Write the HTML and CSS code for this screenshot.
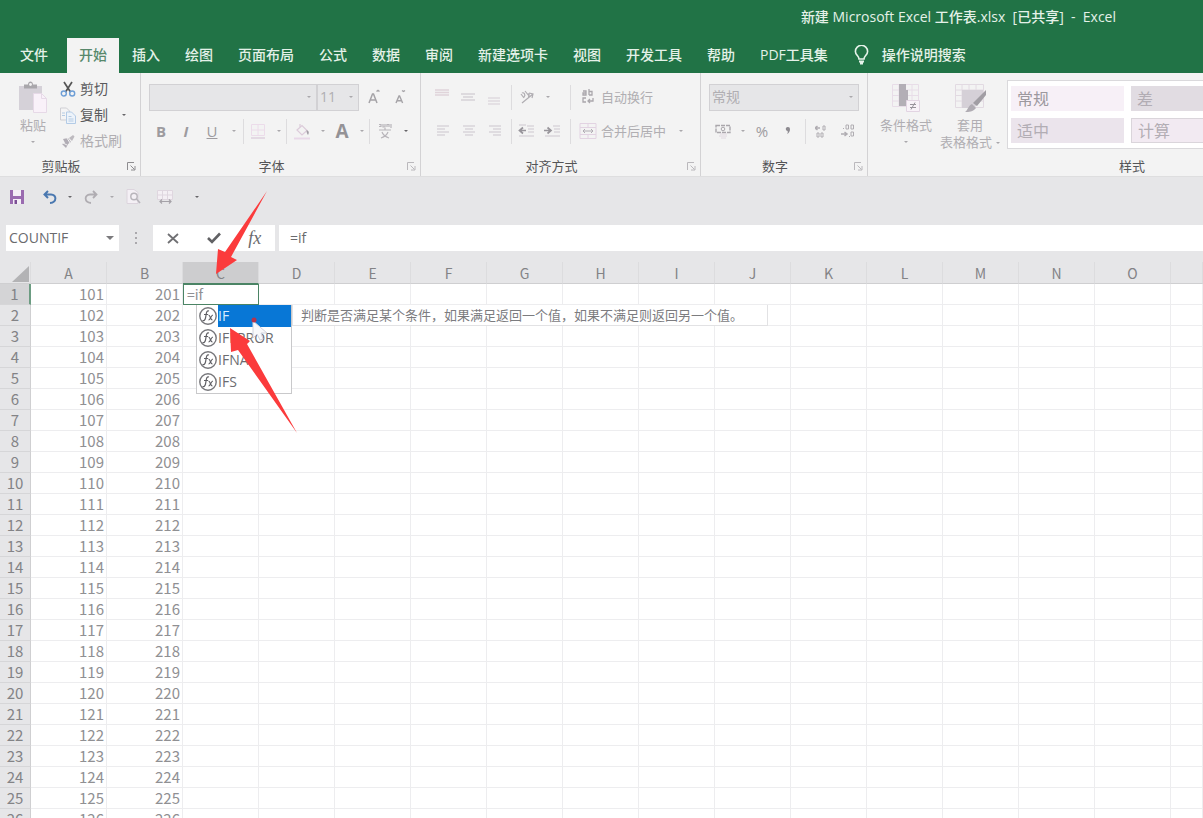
FILE: index.html
```html
<!DOCTYPE html>
<html lang="zh-CN">
<head>
<meta charset="utf-8">
<title>新建 Microsoft Excel 工作表.xlsx</title>
<link rel="stylesheet" href="styles.css">
</head>
<body>
<header class="titlebar">
  <h1 class="title">新建 Microsoft Excel 工作表.xlsx&nbsp; [已共享]&nbsp; -&nbsp; Excel</h1>
</header>
<nav class="tabs">
  <button class="tab tab-file">文件</button>
  <button class="tab tab-active">开始</button>
  <button class="tab">插入</button>
  <button class="tab">绘图</button>
  <button class="tab">页面布局</button>
  <button class="tab">公式</button>
  <button class="tab">数据</button>
  <button class="tab">审阅</button>
  <button class="tab">新建选项卡</button>
  <button class="tab">视图</button>
  <button class="tab">开发工具</button>
  <button class="tab">帮助</button>
  <button class="tab">PDF工具集</button>
  <button class="tab tab-search">
    <svg width="15" height="20" viewBox="0 0 15 20" fill="none" stroke="#e6f3ea" stroke-width="1.6"><path d="M5 14c0-3-3.6-4-3.6-7.6a6.1 6.1 0 0 1 12.200 0C13.600 10 10 11 10 14z"/><path d="M5 16.500h5M6 18.500h3" stroke-width="2"/></svg>
    操作说明搜索</button>
</nav>

<section class="ribbon">
  <div class="group group-clipboard">
    <div class="group-body">
      <button class="big off paste">
        <svg width="30" height="32" viewBox="0 0 30 32"><path d="M1 5h23v24H1z" fill="#d5d1d8"/><path d="M6 3.500h4c0-4 5-4 5 0h4v4H6z" fill="#a9a7ab"/><circle cx="12.500" cy="3.500" r="1.400" fill="#f3f3f3"/><path d="M15.500 12.500h8l5 5v14h-13z" fill="#f9f1f9" stroke="#e6d9e7"/><path d="M23.500 12.500v5h5" fill="none" stroke="#e6d9e7"/></svg>
        <span>粘贴</span><i class="caret"></i>
      </button>
      <div class="stack">
        <button class="line"><svg width="16" height="16" viewBox="0 0 16 16" fill="none"><path d="M4 1l6.500 10M12 1L5.500 11" stroke="#555" stroke-width="1.700"/><circle cx="3.800" cy="12.500" r="2.500" stroke="#6d9ed6" stroke-width="1.400"/><circle cx="12.200" cy="12.500" r="2.500" stroke="#6d9ed6" stroke-width="1.400"/></svg>剪切</button>
        <button class="line"><svg width="16" height="17" viewBox="0 0 16 17"><path d="M.5 1h6l3 3v9h-9z" fill="#f4f4f5" stroke="#cfcfd4"/><path d="M6.500 5h5l4 4v7.500h-9z" fill="#edf3fa" stroke="#b3cbe6"/><path d="M2 6h3M2 8.500h3M8.500 9.500h3M8.500 12h5M8.500 14h5" stroke="#b4cbe4" fill="none"/></svg>复制<i class="caret dark"></i></button>
        <button class="line off"><svg width="16" height="16" viewBox="0 0 16 16"><path d="M9 5l4-3 1.500 1.500L12 8z" fill="#bdbabf"/><path d="M3 6l5-1 3 4-3 2-2 4-4-4 3-1z" fill="#b1adb5"/><path d="M3 10l4 2M7 5l3 5" stroke="#f3f3f3"/></svg>格式刷</button>
      </div>
    </div>
    <div class="group-foot"><span>剪贴板</span><button class="launch dark" aria-label="剪贴板设置"><svg width="9" height="9" viewBox="0 0 9 9" fill="none" stroke="currentColor"><path d="M.5 8V.5H7M3.500 3.500l4 4M8 4v4H4"/></svg></button></div>
  </div>

  <div class="group group-font">
    <div class="group-body rows">
      <div class="row">
        <label class="drop drop-font"><select aria-label="字体" disabled><option></option></select></label>
        <label class="drop drop-size"><select aria-label="字号" disabled><option>11</option></select></label>
        <button class="tool w26 off" aria-label="增大字号"><svg width="14" height="16" viewBox="0 0 14 16" fill="none" stroke="#a5a3a7" stroke-width="1.500"><path d="M2 14L5.500 5h1L10 14M3.300 11h5.400M9.500 2.500l1.500-1 1.500 1"/></svg></button>
        <button class="tool w26 off" aria-label="减小字号"><svg width="14" height="16" viewBox="0 0 14 16" fill="none" stroke="#a5a3a7" stroke-width="1.400"><path d="M3 14l3-7h.600l3 7M4 11.800h4.500M9 1.500l1.500 1 1.500-1"/></svg></button>
      </div>
      <div class="row">
        <button class="tool w24 off letter"><b>B</b></button>
        <button class="tool w26 off letter"><b><em>I</em></b></button>
        <button class="tool w26 off letter"><u>U</u></button>
        <button class="tool w18 off" aria-label="下划线选项"><i class="caret"></i></button>
        <i class="sep"></i>
        <button class="tool w28 off" aria-label="边框"><svg width="16" height="16" viewBox="0 0 16 16" fill="none" stroke="#ecdcea"><path d="M1.500 1.500h13v11h-13zM8 1.500v11M1.500 7h13"/><path d="M1 15h14" stroke="#ded0de" stroke-width="1.500"/></svg></button>
        <button class="tool w14 off" aria-label="边框选项"><i class="caret"></i></button>
        <i class="sep"></i>
        <button class="tool w30 off" aria-label="填充颜色"><svg width="17" height="17" viewBox="0 0 17 17" fill="none"><path d="M3 7l5-4.500 5 5L8 12zM6 1v4" stroke="#dccbda" stroke-width="1.200"/><path d="M12.500 7c3 1 2.500 3 1.500 5-1-1-1.500-3-1.500-5z" fill="#a19da5"/><path d="M0 15.500h16" stroke="#e8d8e8" stroke-width="2"/></svg></button>
        <button class="tool w12 off" aria-label="填充选项"><i class="caret"></i></button>
        <button class="tool w26 off big-a"><b>A</b></button>
        <button class="tool w14 off" aria-label="字体颜色选项"><i class="caret"></i></button>
        <i class="sep"></i>
        <button class="tool w30 off" aria-label="拼音指南"><svg width="14" height="16" viewBox="0 0 14 16" fill="none" stroke="#b8b5ba" stroke-width="1.200"><path d="M1 1.500h2v2H1M5 1v3h2V1M9 4V1.500h2V4M13 1v4M1 7h12M7 5v2M4 9c1 3 4 5 7 6M10 9c-1 3-4 5-7 6"/></svg></button>
        <button class="tool w12 off" aria-label="拼音选项"><i class="caret dark"></i></button>
      </div>
    </div>
    <div class="group-foot"><span>字体</span><button class="launch" aria-label="字体设置"><svg width="9" height="9" viewBox="0 0 9 9" fill="none" stroke="currentColor"><path d="M.5 8V.5H7M3.500 3.500l4 4M8 4v4H4"/></svg></button></div>
  </div>

  <div class="group group-align">
    <div class="group-body rows">
      <div class="row">
        <button class="tool w26 off" aria-label="顶端对齐"><svg width="14" height="16" viewBox="0 0 14 16" stroke="#e0d4da" stroke-width="1.500"><path d="M0 1h14M0 3.500h14M0 6h14"/></svg></button>
        <button class="tool w26 off" aria-label="垂直居中"><svg width="14" height="16" viewBox="0 0 14 16" stroke="#d6d2d7" stroke-width="1.500"><path d="M0 5h14M2 8h10M0 11h14"/></svg></button>
        <button class="tool w26 off" aria-label="底端对齐"><svg width="14" height="16" viewBox="0 0 14 16" stroke="#dfdadf" stroke-width="1.500"><path d="M1 9h12M1 12h12M1 15h12"/></svg></button>
        <i class="gap4"></i><i class="sep"></i>
        <button class="tool w30 off" aria-label="方向"><svg width="16" height="16" viewBox="0 0 16 16" fill="none" stroke="#b0adb2" stroke-width="1.200"><path d="M3 14L14 5M10 4l4 1-1 4M2 5l3 4M3 4c2-1 4 2 2 4M6 2l4 5M9 5c2-1 1 3 0 3"/></svg></button>
        <button class="tool w12 off" aria-label="方向选项"><i class="caret"></i></button>
        <i class="gap16"></i><i class="sep"></i>
        <button class="tool text off"><svg width="18" height="16" viewBox="0 0 18 16" fill="none" stroke="#aaa7ac" stroke-width="1.300"><path d="M4 2h3v4H4V4h3M10 0v6M10 2.500h3V6h-3M7 9H4v4h3M14 9v3H9M11 10l-2 2 2 2"/></svg>自动换行</button>
      </div>
      <div class="row">
        <button class="tool w26 off" aria-label="左对齐"><svg width="13" height="14" viewBox="0 0 13 14" stroke="#d9d5da" stroke-width="1.300"><path d="M1 2h12M1 5h8M1 8h12M1 11h8"/></svg></button>
        <button class="tool w26 off" aria-label="居中"><svg width="13" height="14" viewBox="0 0 13 14" stroke="#d9d5da" stroke-width="1.300"><path d="M1 2h12M3 5h8M1 8h12M3 11h8"/></svg></button>
        <button class="tool w26 off" aria-label="右对齐"><svg width="13" height="14" viewBox="0 0 13 14" stroke="#d9d5da" stroke-width="1.300"><path d="M1 2h12M5 5h8M1 8h12M5 11h8"/></svg></button>
        <i class="gap4"></i><i class="sep"></i>
        <button class="tool w28 off" aria-label="减少缩进"><svg width="16" height="14" viewBox="0 0 16 14" fill="none"><path d="M9 2h7M10 5h6M10 8h6M1 12h15M1 1h7" stroke="#dad6db" stroke-width="1.300"/><path d="M8 6.500H1.500M5 3.500l-3.500 3 3.500 3" stroke="#98959b" stroke-width="1.700"/></svg></button>
        <button class="tool w24 off" aria-label="增加缩进"><svg width="16" height="14" viewBox="0 0 16 14" fill="none"><path d="M9 2h7M10 5h6M10 8h6M1 12h15" stroke="#dad6db" stroke-width="1.300"/><path d="M0 6.500h7M3.500 3.500l3.500 3-3.500 3" stroke="#98959b" stroke-width="1.700"/></svg></button>
        <i class="gap6"></i><i class="sep"></i>
        <button class="tool text off"><svg width="18" height="16" viewBox="0 0 18 16" fill="none"><path d="M1 .5h16v15H1zM1 4.500h16M1 11.500h16M9 .5v4M9 11.500v4" stroke="#e2d3e2"/><path d="M4 8h10M6 6L4 8l2 2M12 6l2 2-2 2" stroke="#b0acb3"/></svg>合并后居中</button>
        <button class="tool w30 off" aria-label="合并选项"><i class="caret"></i></button>
      </div>
    </div>
    <div class="group-foot"><span>对齐方式</span><button class="launch" aria-label="对齐设置"><svg width="9" height="9" viewBox="0 0 9 9" fill="none" stroke="currentColor"><path d="M.5 8V.5H7M3.500 3.500l4 4M8 4v4H4"/></svg></button></div>
  </div>

  <div class="group group-number">
    <div class="group-body rows">
      <div class="row"><label class="drop drop-number"><select aria-label="数字格式" disabled><option>常规</option></select></label></div>
      <div class="row">
        <button class="tool w28 off" aria-label="会计格式"><svg width="16" height="15" viewBox="0 0 16 15" fill="none" stroke="#aaa7ac"><path d="M1 1.500h14v7H1z" stroke-width="1.400" stroke-dasharray="4 1"/><circle cx="8" cy="5" r="1.800"/><path d="M5 10h7M4 12h8M6 14h5" stroke="#e0d8e0"/></svg></button>
        <button class="tool w12 off" aria-label="货币选项"><i class="caret"></i></button>
        <button class="tool w26 off letter">%</button>
        <button class="tool w26 off" aria-label="千位分隔"><svg width="8" height="10" viewBox="0 0 8 10"><path d="M4 1a2 2 0 0 1 2 2c0 2.500-1 4-3 5 1-1.500 1-2 .5-3A2 2 0 0 1 4 1z" fill="#8d8a90"/></svg></button>
        <i class="gap4"></i><i class="sep"></i>
        <button class="tool w30 off" aria-label="增加小数位"><svg width="12" height="14" viewBox="0 0 12 14" fill="none" stroke="#b0adb2"><path d="M0 4h5M2.500 2L0 4l2.500 2" stroke-width="1.500"/><path d="M8 2h2v4H8zM2 9h2v4H2zM6 9h2v4H6z"/></svg></button>
        <button class="tool w24 off" aria-label="减少小数位"><svg width="14" height="14" viewBox="0 0 14 14" fill="none" stroke="#b0adb2"><path d="M0 10h6M3.500 8L6 10l-2.500 2" stroke-width="1.500"/><path d="M5 1h2.500v4H5zM10 1h2.500v4H10zM10 8h2.500v4H10zM2 4.500h1M8 12.500h1"/></svg></button>
      </div>
    </div>
    <div class="group-foot"><span>数字</span><button class="launch" aria-label="数字设置"><svg width="9" height="9" viewBox="0 0 9 9" fill="none" stroke="currentColor"><path d="M.5 8V.5H7M3.500 3.500l4 4M8 4v4H4"/></svg></button></div>
  </div>

  <div class="group group-style">
    <div class="group-body">
      <button class="big off cond">
        <svg width="30" height="32" viewBox="0 0 30 32" fill="none"><path d="M1.500 3.500h26v22h-26zM1.500 9h26M1.500 14.500h26M1.500 20h26M8 3.500v22M21 3.500v22" stroke="#e8dde8"/><path d="M8 3h7v6h2v11h-2v5H8z" fill="#b3afb6"/><path d="M15.500 19.500h13v11h-13z" fill="#f8f2f8" stroke="#e2d4e2"/><path d="M19 23.500h6M19 26.500h6M24 21.500l-4 7" stroke="#98949b"/></svg>
        <span>条件格式</span><i class="caret"></i>
      </button>
      <button class="big off fmt">
        <svg width="33" height="32" viewBox="0 0 33 32" fill="none"><path d="M1.500 3.500h28v23h-28zM1.500 9h28M1.500 14.500h28M1.500 20h28M8 3.500v23M15 3.500v6M22 3.500v6" stroke="#e2dae2"/><path d="M8 9h21v9l-9 9H8z" fill="#d5d0d7"/><path d="M32 9v5l-9 11-4-3z" fill="#a19ea4"/><path d="M18 23l4 4c-3 4-7 4-11 4 3-2 3-6 7-8z" fill="#b0acb3"/></svg>
        <span>套用</span><span class="with-caret">表格格式<i class="caret"></i></span>
      </button>
      <div class="gallery">
        <button class="swatch s-normal">常规</button><button class="swatch s-bad">差</button>
        <button class="swatch s-mid">适中</button><button class="swatch s-calc">计算</button>
      </div>
    </div>
    <div class="group-foot"><span>样式</span></div>
  </div>
</section>

<div class="quick">
  <button class="tool w34" aria-label="保存"><svg width="14" height="14" viewBox="0 0 14 14"><path d="M0 0h14v14H0z" fill="#9a6bb0"/><path d="M3 0h8v6H3z" fill="#f4eef6"/><path d="M3 9h8v5H3z" fill="#f4eef6"/><path d="M4.500 10h2.500v4H4.500z" fill="#7c4f95"/></svg></button>
  <button class="tool w32" aria-label="撤消"><svg width="14" height="14" viewBox="0 0 14 14" fill="none" stroke="#4a78b0" stroke-width="2"><path d="M5 1L1.500 4.500 5 8M2 4.500h6c6 0 6 8-1 8.500"/></svg></button>
  <button class="tool w8" aria-label="撤消选项"><i class="caret dark"></i></button>
  <button class="tool w34" aria-label="恢复"><svg width="14" height="14" viewBox="0 0 14 14" fill="none" stroke="#b0adb2" stroke-width="1.800"><path d="M9 1l3.500 3.500L9 8M12 4.500H6c-6 0-6 8 1 8.500"/></svg></button>
  <button class="tool w8" aria-label="恢复选项"><i class="caret"></i></button>
  <button class="tool w34" aria-label="打印预览"><svg width="15" height="15" viewBox="0 0 15 15" fill="none"><path d="M1 .5h7l4 3v11H1z" fill="#f4f0f5" stroke="#dcd4dd"/><circle cx="8" cy="7.500" r="3.200" stroke="#b8b5bb" stroke-width="1.400"/><path d="M10.500 10l3.500 4" stroke="#b8b5bb" stroke-width="1.700"/></svg></button>
  <button class="tool w30" aria-label="列宽"><svg width="16" height="15" viewBox="0 0 16 15" fill="none"><path d="M.5 1.500h15v9H.5zM.5 6h15M5.500 1.500v9M10.500 1.500v9" fill="#f4eff4" stroke="#dfd6df"/><path d="M3 12.500h11M5 10.500l-2 2 2 2M12 10.500l2 2-2 2" stroke="#a5a2a8" stroke-width="1.200"/></svg></button>
  <button class="tool w34" aria-label="自定义快速访问工具栏"><i class="caret dark"></i></button>
</div>

<div class="formula">
  <div class="namebox"><input type="text" value="COUNTIF" aria-label="名称框"><button aria-label="名称列表"><i class="caret wide"></i></button></div>
  <svg class="dots" width="4" height="13" viewBox="0 0 4 13" fill="#aaa8ac"><path d="M1 0h2v2H1zM1 5h2v2H1zM1 10h2v2H1z"/></svg>
  <div class="fbuttons">
    <button aria-label="取消"><svg width="12" height="11" viewBox="0 0 12 11" fill="none" stroke="#707073" stroke-width="1.800"><path d="M1 1l10 9M11 1L1 10"/></svg></button>
    <button aria-label="输入"><svg width="14" height="12" viewBox="0 0 14 12" fill="none" stroke="#616164" stroke-width="2.600"><path d="M1 6l4 4 8-8.500"/></svg></button>
    <button class="fx"><em>fx</em></button>
  </div>
  <input class="fx-input" type="text" value="=if" aria-label="编辑栏">
</div>

<main class="sheet">
  <table class="grid">
    <colgroup id="cols"><col class="c-head"></colgroup>
    <thead><tr id="heads"><th class="corner"><svg width="17" height="16" viewBox="0 0 17 16"><path d="M17 0v16H0z" fill="#b3b3b5"/></svg></th></tr></thead>
    <tbody id="body"></tbody>
  </table>
  <div class="suggest">
    <ul class="list">
      <li class="on"><svg width="20" height="20"><use href="#fxi"/></svg><span>IF</span></li>
      <li><svg width="20" height="20"><use href="#fxi"/></svg><span>IFERROR</span></li>
      <li><svg width="20" height="20"><use href="#fxi"/></svg><span>IFNA</span></li>
      <li><svg width="20" height="20"><use href="#fxi"/></svg><span>IFS</span></li>
    </ul>
    <p class="tip">判断是否满足某个条件，如果满足返回一个值，如果不满足则返回另一个值。</p>
  </div>
</main>

<svg class="marks" width="320" height="450" viewBox="0 0 320 450">
  <defs><symbol id="fxi" viewBox="0 0 20 20"><circle cx="10" cy="10" r="8.200" fill="#fff" stroke="#77777b" stroke-width="1.400"/><path d="M11 5C8 4 8.500 8 7.500 12c-.5 2-1.500 3-3 2.500M6 8.500h4M10.500 9c2 0 1.500 5 4 5M15 9c-2 0-2.500 5-4.500 5" fill="none" stroke="#606065" stroke-width="1.200"/></symbol></defs>
  <path d="M253 321v17l4-4 3 6 3-1-2-6h6z" fill="#f8f8fb" stroke="#d2d2dc"/>
  <circle cx="254" cy="320" r="2.500" fill="#b3344e"/>
  <path d="M267 191L225 252l-7-3-2 25 21-14-6-3z" fill="#fb3b3c"/>
  <path d="M230 328l20 13-3 3 50 89-59-83-7 2z" fill="#fb3b3c"/>
</svg>
<script src="grid.js"></script>
</body>
</html>
```
FILE: styles.css
```css
* { box-sizing: border-box; }
body {
  margin: 0;
  height: 100vh;
  overflow: hidden;
  position: relative;
  display: flex;
  flex-direction: column;
  background: #fff;
  font: 14px/20px "Open Sans", "Noto Sans CJK SC", sans-serif;
  color: #5a5a5c;
}
button, input, select { font: inherit; color: inherit; }
button { background: none; border: 0; padding: 0; display: flex; align-items: center; justify-content: center; white-space: nowrap; }
i { font-style: normal; }
svg { flex: none; display: block; }

.titlebar { background: #217346; height: 38px; flex: none; display: flex; justify-content: flex-end; padding: 7px 87px 0 0; }
.title { margin: 0; font-size: 14px; line-height: 20px; font-weight: 500; color: #e4f1e8; white-space: nowrap; }

.tabs { background: #217346; height: 35px; flex: none; display: flex; padding-left: 7px; color: #e4f1e8; font-weight: 500; }
.tab { padding: 0 12px 2px 13px; }
.tab-file { margin-right: 7px; }
.tab-active { background: #f3f3f3; color: #57886b; padding: 0 12px 2px; }
.tab-search { gap: 13px; padding-left: 14px; }

.ribbon { background: #f3f3f3; flex: none; height: 104px; display: flex; border-bottom: 1px solid #dededf; }
.group { flex: none; display: flex; flex-direction: column; border-right: 1px solid #d3d2d4; background: #f3f3f3; }
.group-clipboard { width: 141px; }
.group-font { width: 280px; }
.group-align { width: 280px; }
.group-number { width: 167px; }
.group-style { flex: 1; min-width: 0; border-right: 0; overflow: hidden; }
.group-body { display: flex; height: 84px; padding-top: 3px; }
.rows { flex-direction: column; padding: 10px 0 0 8px; gap: 6px; }
.row { display: flex; height: 28px; align-items: center; }
.group-foot { display: grid; grid-template-columns: 1fr 18px; height: 19px; font-size: 13px; line-height: 18px; text-align: center; color: #555557; }
.launch { color: #bab8bc; }
.launch.dark { color: #8e8d90; }
.off { color: #b0aeb2; }
.letter { color: #9d9b9f; }
.caret { display: block; width: 0; border: 2px solid transparent; border-top-color: #aaa8ac; border-bottom: 0; }
.caret.dark { border-top-color: #666568; }
.caret.wide { border-width: 4px 4px 0; border-top-color: #7b7a7d; }

.big { flex-direction: column; justify-content: flex-start; font-size: 13px; line-height: 17px; padding-top: 5px; }
.big svg { margin-bottom: 4px; }
.big .caret { margin-top: 7px; }
.paste { margin-left: 17px; width: 32px; }
.stack { display: flex; flex-direction: column; padding-left: 11px; }
.line { height: 26px; gap: 4px; justify-content: flex-start; }
.line .caret { margin-left: 10px; }
.cond { width: 56px; margin-left: 10px; }
.fmt { width: 64px; margin-left: 4px; }
.with-caret { display: flex; align-items: center; gap: 4px; }
.with-caret .caret { margin: 0; }

.drop { position: relative; display: block; }
.drop select { appearance: none; display: block; width: 100%; height: 27px; background: #e6e6e8; border: 1px solid #d2d1d4; border-radius: 0; padding: 0 2px; color: #b0aeb2; opacity: 1; }
.drop::after { content: ""; position: absolute; right: 6px; top: 12px; border: 2px solid transparent; border-top-color: #aaa8ac; border-bottom: 0; }
.drop-font { width: 168px; }
.drop-size { width: 42px; margin-right: 2px; }
.drop-number { width: 150px; }

.tool { height: 28px; flex: none; font-size: 15px; }
.text { font-size: 13px; gap: 4px; padding-left: 8px; }
.big-a { font-size: 19px; color: #949296; }
.sep { width: 1px; height: 25px; background: #dddcde; flex: none; }
.w8 { width: 8px; }
.w12 { width: 12px; }
.w14 { width: 14px; }
.w18 { width: 18px; }
.w24 { width: 24px; }
.w26 { width: 26px; }
.w28 { width: 28px; }
.w30 { width: 30px; }
.w32 { width: 32px; }
.w34 { width: 34px; }
.gap16 { width: 16px; }
.gap6 { width: 6px; }
.gap4 { width: 4px; }

.gallery { flex: 1; margin: 4px 0 0 5px; height: 69px; background: #fff; border: 1px solid #dad9dc; border-right: 0; display: grid; grid-template-columns: 113px 1fr; grid-template-rows: 25px 25px; gap: 7px; padding: 5px 0 0 3px; }
.swatch { justify-content: flex-start; padding-left: 6px; font-size: 16px; color: #b2adb4; }
.s-normal { background: #f7f0f7; color: #9c989e; }
.s-bad { background: #e1dce2; }
.s-mid { background: #ebe4ec; }
.s-calc { background: #f2eaf2; border: 1px solid #dad5db; border-right: 0; }
.group-style .group-foot { display: block; text-align: right; padding-right: 58px; }

.quick { background: #e6e6e8; height: 39px; flex: none; display: flex; align-items: center; }
.formula { background: #e6e6e8; height: 46px; flex: none; display: flex; padding: 9px 0 11px 6px; color: #6a6a6d; }
.namebox { width: 113px; background: #fff; display: flex; }
.namebox input { flex: 1; min-width: 0; border: 0; padding: 0 3px; background: none; }
.namebox button { width: 19px; }
.dots { margin: 7px 15px 0; }
.fbuttons { width: 122px; background: #fff; display: flex; }
.fbuttons button { flex: 1; }
.fx { font-family: "Liberation Serif", serif; font-size: 18px; }
.fx-input { flex: 1; min-width: 0; margin-left: 4px; border: 0; background: #fff; padding: 0 11px; }

.sheet { flex: 1; min-height: 0; overflow: hidden; position: relative; font-family: "Noto Sans CJK SC", sans-serif; }
.grid { width: 100%; table-layout: fixed; border-collapse: separate; border-spacing: 0; font-size: 15px; line-height: 20px; color: #909093; }
.c-head { width: 31px; }
.c-data { width: 76px; }
.grid th { font-weight: 400; padding: 0; background: #e6e6e8; color: #838386; height: 21px; overflow: hidden; }
.grid thead th { border-right: 1px solid #dcdcde; border-bottom: 1px solid #cfcfd1; height: 22px; font-size: 14px; }
.grid tbody th { border-right: 1px solid #cfcfd1; border-bottom: 1px solid #d6d6d8; }
.grid td { padding: 0 2px; height: 21px; text-align: right; border-right: 1px solid #ededef; border-bottom: 1px solid #ededef; overflow: hidden; }
.grid .corner svg { margin: 3px 0 0 12px; }
.grid thead .sel { background: #cdcdcf; border-bottom-color: #4b8465; }
.grid tbody .sel { background: #d4d4d6; border-right: 2px solid #6c9c82; }
.grid .edit { padding: 0; border-color: #4b8465; box-shadow: inset 1px 1px 0 #4b8465; }
.edit input { display: block; width: 100%; height: 20px; border: 0; background: none; padding: 0 4px; font-size: 14px; outline: 0; }

.suggest { position: absolute; left: 196px; top: 43px; display: flex; align-items: flex-start; font-family: "Open Sans", "Noto Sans CJK SC", sans-serif; }
.list { margin: 0; padding: 0; list-style: none; width: 96px; background: #fff; border: 1px solid #c9c9cb; border-top: 0; color: #6c6c70; }
.list li { display: flex; align-items: center; height: 22px; padding-left: 1px; }
.list span { flex: 1; line-height: 22px; }
.list .on span { background: #0877d6; color: #d9ecff; }
.tip { margin: 0; background: #fff; border: 1px solid #e2e2e4; border-top: 0; font-size: 13px; line-height: 20px; padding: 0 24px 0 8px; white-space: nowrap; color: #7c7c7f; }
.marks { position: absolute; left: 0; top: 0; pointer-events: none; }
```
FILE: grid.js
```js
const letters = 'ABCDEFGHIJKLMNO'.split('');
const cols = document.getElementById('cols');
const heads = document.getElementById('heads');
const body = document.getElementById('body');

const add = (parent, tag, text, cls) => {
  const el = document.createElement(tag);
  if (text) el.textContent = text;
  if (cls) el.className = cls;
  parent.appendChild(el);
  return el;
};

letters.forEach((l) => {
  add(cols, 'col', '', 'c-data');
  add(heads, 'th', l, l === 'C' ? 'sel' : '');
});
add(cols, 'col');
add(heads, 'th');

for (let r = 1; r <= 26; r++) {
  const tr = add(body, 'tr');
  add(tr, 'th', String(r), r === 1 ? 'sel' : '');
  add(tr, 'td', String(100 + r));
  add(tr, 'td', String(200 + r));
  for (let c = 2; c <= letters.length; c++) {
    const td = add(tr, 'td');
    if (r === 1 && c === 2) {
      td.className = 'edit';
      const input = add(td, 'input');
      input.type = 'text';
      input.value = '=if';
      input.setAttribute('aria-label', 'C1');
    }
  }
}
```
